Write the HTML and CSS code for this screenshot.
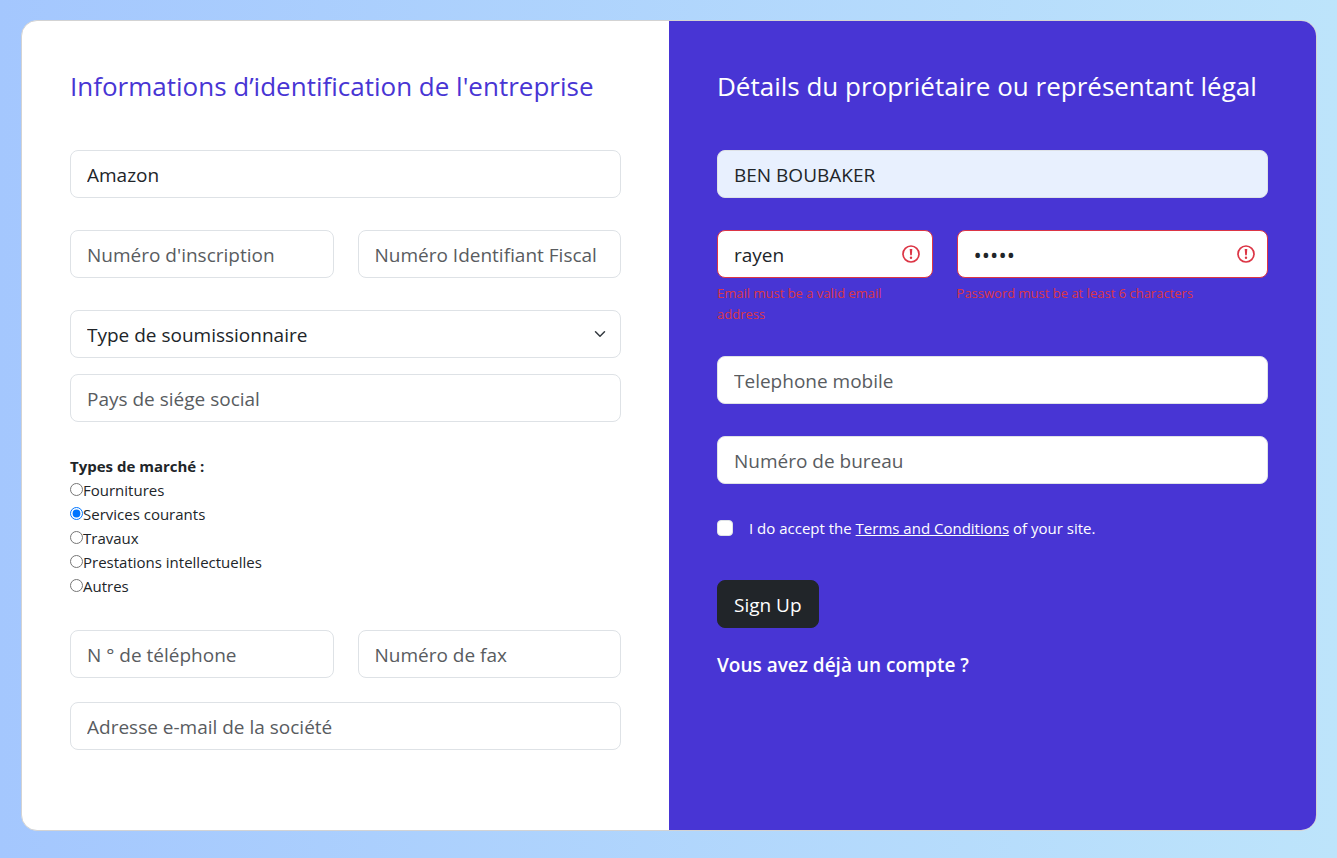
FILE: index.html
```html
<!DOCTYPE html>
<html lang="fr">
<head>
<meta charset="utf-8">
<meta name="viewport" content="width=device-width, initial-scale=1">
<title>Inscription</title>
<link rel="stylesheet" href="styles.css">
</head>
<body>
<main class="page">
  <form class="card" novalidate>
    <section class="panel panel-company">
      <h3 class="title">Informations d’identification de l'entreprise</h3>
      <input class="control" type="text" value="Amazon" aria-label="Nom de l'entreprise">
      <div class="row">
        <input class="control" type="text" placeholder="Numéro d'inscription" aria-label="Numéro d'inscription">
        <input class="control" type="text" placeholder="Numéro Identifiant Fiscal" aria-label="Numéro Identifiant Fiscal">
      </div>
      <div class="stack">
        <div class="select-wrap">
          <select class="control select" aria-label="Type de soumissionnaire">
            <option>Type de soumissionnaire</option>
          </select>
          <svg class="chevron" viewBox="0 0 16 16" aria-hidden="true"><path d="m2 5 6 6 6-6"/></svg>
        </div>
        <input class="control" type="text" placeholder="Pays de siége social" aria-label="Pays de siége social">
      </div>
      <fieldset class="markets">
        <legend class="markets-title">Types de marché :</legend>
        <label class="radio"><input type="radio" name="market">Fournitures</label>
        <label class="radio"><input type="radio" name="market" checked>Services courants</label>
        <label class="radio"><input type="radio" name="market">Travaux</label>
        <label class="radio"><input type="radio" name="market">Prestations intellectuelles</label>
        <label class="radio"><input type="radio" name="market">Autres</label>
      </fieldset>
      <div class="contact">
        <div class="row">
          <input class="control" type="tel" placeholder="N ° de téléphone" aria-label="N ° de téléphone">
          <input class="control" type="text" placeholder="Numéro de fax" aria-label="Numéro de fax">
        </div>
        <input class="control" type="email" placeholder="Adresse e-mail de la société" aria-label="Adresse e-mail de la société">
      </div>
    </section>
    <section class="panel panel-owner">
      <h3 class="title">Détails du propriétaire ou représentant légal</h3>
      <input class="control filled" type="text" value="BEN BOUBAKER" aria-label="Nom">
      <div class="row credentials">
        <div class="field">
          <div class="invalid-wrap">
            <input class="control invalid" type="email" value="rayen" aria-label="Email" aria-describedby="email-error">
            <svg class="alert" viewBox="0 0 20 20" aria-hidden="true"><circle cx="10" cy="10" r="8"/><path d="M8.700 5h2.600l-.5 6.300H9.200z"/><circle class="dot" cx="10" cy="13.800" r="1.200"/></svg>
          </div>
          <p class="error" id="email-error">Email must be a valid email address</p>
        </div>
        <div class="field">
          <div class="invalid-wrap">
            <input class="control invalid password" type="password" value="12345" aria-label="Password" aria-describedby="password-error">
            <svg class="alert" viewBox="0 0 20 20" aria-hidden="true"><circle cx="10" cy="10" r="8"/><path d="M8.700 5h2.600l-.5 6.300H9.200z"/><circle class="dot" cx="10" cy="13.800" r="1.200"/></svg>
          </div>
          <p class="error" id="password-error">Password must be at least 6 characters</p>
        </div>
      </div>
      <input class="control" type="tel" placeholder="Telephone mobile" aria-label="Telephone mobile">
      <input class="control" type="tel" placeholder="Numéro de bureau" aria-label="Numéro de bureau">
      <div class="terms">
        <input class="check" type="checkbox" id="terms">
        <label for="terms">I do accept the <a href="#terms">Terms and Conditions</a> of your site.</label>
      </div>
      <div class="actions">
        <button class="submit" type="submit">Sign Up</button>
        <h5 class="login">Vous avez déjà un compte ?</h5>
      </div>
    </section>
  </form>
</main>
</body>
</html>
```
FILE: styles.css
```css
* { box-sizing: border-box; }

body {
  margin: 0;
  min-height: 100vh;
  background: linear-gradient(to right, #a4c7fe, #bde4fb);
  color: #212529;
  font: 400 15px/24px "Open Sans", "Noto Sans", sans-serif;
}

.page { padding: 20px 20px 27px 21px; }

.card {
  display: grid;
  grid-template-columns: 1fr 1fr;
  overflow: hidden;
  border: 1px solid #d3d3d3;
  border-radius: 16px;
  background: #fff;
}

.panel {
  display: flex;
  flex-direction: column;
  gap: 32px;
  min-width: 0;
  padding: 48px 48px 80px;
}

.panel-company .title { color: #4835d4; }

.panel-owner {
  background: #4835d4;
  color: #fff;
}

.title {
  margin: 0 0 14px;
  font-size: 26px;
  font-weight: 400;
  line-height: 35px;
}

.control {
  display: block;
  width: 100%;
  min-width: 0;
  height: 48px;
  padding: 9px 16px 7px;
  border: 1px solid #dee2e6;
  border-radius: 8px;
  background: #fff;
  color: #212529;
  font: inherit;
  font-size: 19px;
  line-height: 30px;
}

.control::placeholder { color: #595c5f; opacity: 1; }

.filled { background: #e8f0fe; }

.row {
  display: grid;
  grid-template-columns: 1fr 1fr;
  gap: 24px;
}

.credentials { grid-template-columns: 9fr 13fr; }

.stack { display: grid; gap: 16px; }

.contact { display: grid; gap: 24px; }

.select-wrap,
.invalid-wrap { position: relative; }

.select { appearance: none; }

.chevron {
  position: absolute;
  top: 18px;
  right: 15px;
  width: 12px;
  height: 12px;
  fill: none;
  stroke: #343a40;
  stroke-width: 2;
  stroke-linecap: round;
  stroke-linejoin: round;
  pointer-events: none;
}

.markets {
  display: grid;
  min-width: 0;
  margin: 0;
  padding: 0;
  border: 0;
}

.markets-title {
  padding: 0;
  font-weight: 700;
}

.radio {
  display: flex;
  align-items: center;
}

.radio input {
  width: 13px;
  height: 13px;
  margin: 0 0 2px;
}

.invalid { border-color: #dc3545; padding-right: 40px; }

.password {
  padding-top: 8px;
  padding-bottom: 8px;
  font-size: 22px;
}

.alert {
  position: absolute;
  top: 14px;
  right: 12px;
  width: 20px;
  height: 20px;
  fill: none;
  stroke: #dc3545;
  stroke-width: 1.700;
}

.alert path,
.alert .dot { fill: #dc3545; stroke: none; }

.error {
  margin: 5px 0 -1px;
  color: #dc3545;
  font-size: 13px;
  line-height: 21px;
}

.terms {
  display: flex;
  align-items: center;
  gap: 16px;
}

.terms a { color: inherit; }

.check {
  appearance: none;
  width: 16px;
  height: 16px;
  margin: 0;
  border: 1px solid #dee2e6;
  border-radius: 4px;
  background: #fff;
}

.check:checked { background: #0d6efd; }

.actions {
  display: grid;
  justify-items: start;
  gap: 24px;
  padding-top: 8px;
}

.submit {
  height: 48px;
  padding: 9px 16px 7px;
  border: 1px solid #212529;
  border-radius: 8px;
  background: #212529;
  color: #fff;
  font: inherit;
  font-size: 19px;
  line-height: 30px;
}

.login {
  margin: 0;
  font-size: 19px;
  font-weight: 600;
  line-height: 26px;
}

@media (max-width: 800px) {
  .card { grid-template-columns: 1fr; }
}
```
